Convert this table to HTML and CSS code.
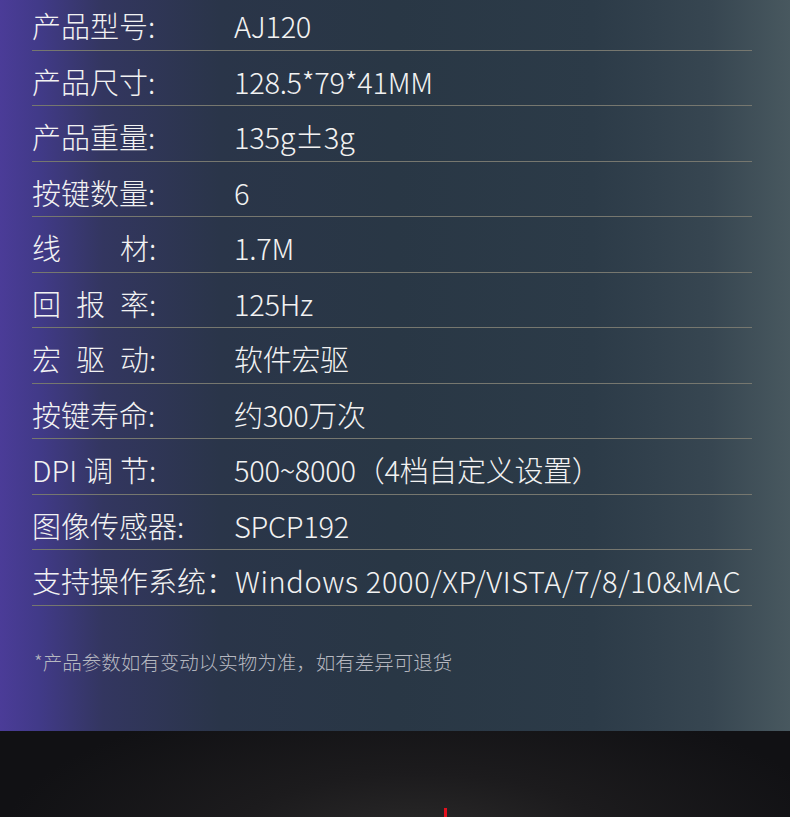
FILE: index.html
```html
<!DOCTYPE html>
<html lang="zh-CN">
	<head>
		<meta charset="UTF-8" />
		<meta name="viewport" content="width=device-width, initial-scale=1.0" />
		<title>产品参数</title>
		<link rel="stylesheet" href="styles.css">
	</head>
	<body>
		<section class="spec">
			<div class="spec-list">
				<div class="spec-row">
					<div class="spec-label">产品型号:</div>
					<div class="spec-value">AJ120</div>
				</div>
				<div class="spec-row">
					<div class="spec-label">产品尺寸:</div>
					<div class="spec-value">128.5*79*41MM</div>
				</div>
				<div class="spec-row">
					<div class="spec-label">产品重量:</div>
					<div class="spec-value">135g±3g</div>
				</div>
				<div class="spec-row">
					<div class="spec-label">按键数量:</div>
					<div class="spec-value">6</div>
				</div>
				<div class="spec-row">
					<div class="spec-label"><span class="spread"><span>线</span><span>材</span></span>:</div>
					<div class="spec-value">1.7M</div>
				</div>
				<div class="spec-row">
					<div class="spec-label"><span class="spread"><span>回</span><span>报</span><span>率</span></span>:</div>
					<div class="spec-value">125Hz</div>
				</div>
				<div class="spec-row">
					<div class="spec-label"><span class="spread"><span>宏</span><span>驱</span><span>动</span></span>:</div>
					<div class="spec-value">软件宏驱</div>
				</div>
				<div class="spec-row">
					<div class="spec-label">按键寿命:</div>
					<div class="spec-value">约300万次</div>
				</div>
				<div class="spec-row">
					<div class="spec-label"><span class="spread"><span>DPI</span><span>调</span><span>节</span></span>:</div>
					<div class="spec-value">500~8000（4档自定义设置）</div>
				</div>
				<div class="spec-row">
					<div class="spec-label">图像传感器:</div>
					<div class="spec-value">SPCP192</div>
				</div>
				<div class="spec-row">
					<div class="spec-label">支持操作系统：</div>
					<div class="spec-value spec-value-wide">Windows 2000/XP/VISTA/7/8/10&amp;MAC</div>
				</div>
			</div>
			<p class="spec-note">*产品参数如有变动以实物为准，如有差异可退货</p>
		</section>

		<section class="showcase">
			<div class="showcase-mark"></div>
		</section>
	</body>
</html>
```

FILE: styles.css
```css
html,
body {
	margin: 0;
	padding: 0;
}
body {
	width: 790px;
	height: 817px;
	overflow: hidden;
	font-family: 'Noto Sans CJK SC', 'Noto Sans', sans-serif;
	background-color: #111114;
	color: #f2f2f2;
}
.spec {
	height: 731px;
	box-sizing: border-box;
	overflow: hidden;
	background: linear-gradient(
		to right,
		#4b3c98 0%,
		#413a88 5%,
		#333660 13%,
		#2a3549 28%,
		#293745 50%,
		#2c3b48 75%,
		#374651 90%,
		#48585f 100%
	);
}
.spec-list {
	width: 720px;
	margin: -5px 0 0 32px;
}
.spec-row {
	display: flex;
	align-items: center;
	height: 55.5px;
	box-sizing: border-box;
	padding-top: 7px;
	border-bottom: 1px solid #76776f;
	font-size: 29px;
	font-weight: 300;
	line-height: 1;
	white-space: nowrap;
}
.spec-label {
	flex: 0 0 202px;
	display: flex;
	align-items: center;
}
.spread {
	display: flex;
	justify-content: space-between;
	width: 117px;
}
.spec-value {
	flex: 1;
	letter-spacing: -0.3px;
}
.spec-value-wide {
	letter-spacing: 0.6px;
}
.spec-note {
	margin: 41px 0 0 34px;
	font-size: 19.5px;
	font-weight: 300;
	color: #b6b8c0;
}
.showcase {
	height: 86px;
	display: flex;
	align-items: flex-end;
	padding-left: 444px;
	box-sizing: border-box;
	background: radial-gradient(ellipse 420px 150px at 420px 110px, #2b2a2a 0%, #1c1b1d 45%, #111114 100%);
}
.showcase-mark {
	width: 3px;
	height: 9px;
	background-color: #e3101c;
}
```
